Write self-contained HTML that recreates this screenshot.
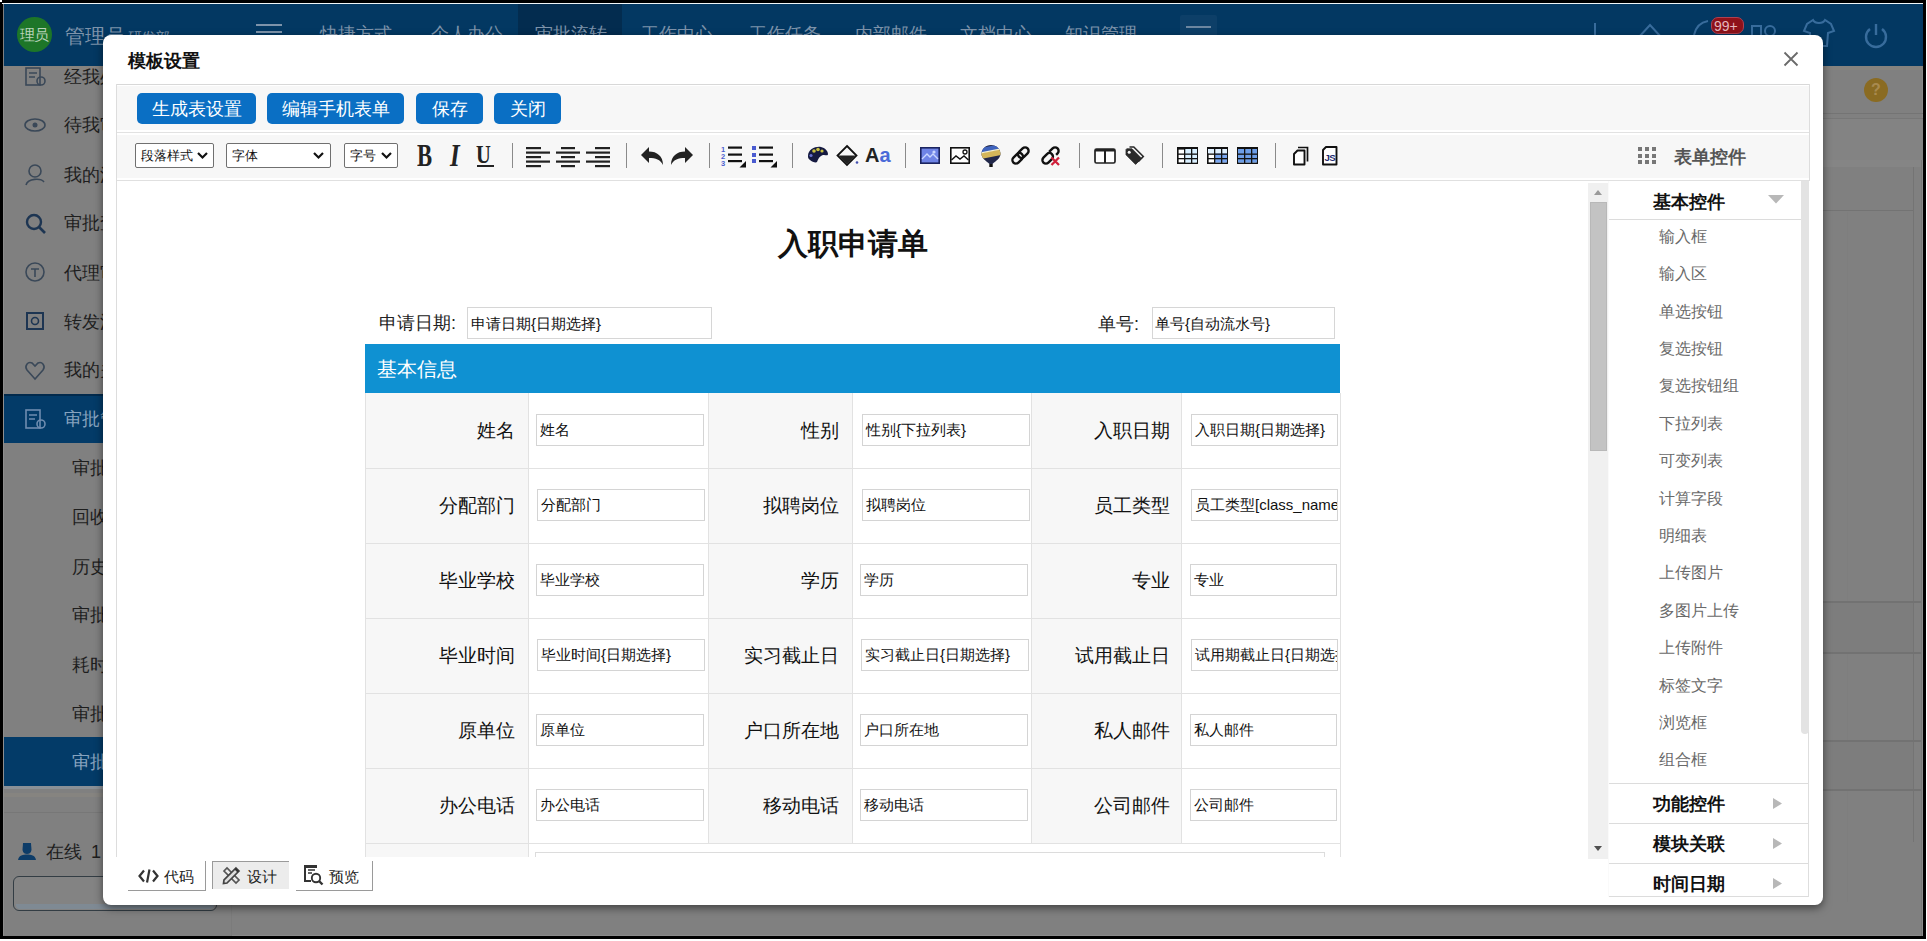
<!DOCTYPE html>
<html><head><meta charset="utf-8">
<style>
*{box-sizing:border-box}
html,body{margin:0;padding:0}
body{width:1927px;height:941px;position:relative;overflow:hidden;background:#fff;font-family:"Liberation Sans",sans-serif;color:#222}
.a{position:absolute}
.t{white-space:nowrap}
svg{overflow:visible}
</style></head><body>
<div class="a" style="left:0px;top:0px;width:1926px;height:939px;background:#000"></div>
<div class="a" style="left:3px;top:3px;width:1920px;height:933px;background:#808080"></div>
<div class="a" style="left:2px;top:3px;width:1921px;height:1px;background:#f0f6f8"></div>
<div class="a" style="left:3px;top:66px;width:1px;height:870px;background:#8e8e8e"></div>
<div class="a" style="left:0px;top:0px;width:2px;height:2px;background:#fff"></div>
<div class="a" style="left:1922px;top:4px;width:1px;height:932px;background:#8a8a8a"></div>
<div class="a" style="left:3px;top:935px;width:1920px;height:1px;background:#8a8a8a"></div>
<div class="a" style="left:4px;top:4px;width:1919px;height:62px;background:#033862"></div>
<div class="a" style="left:518px;top:4px;width:104px;height:62px;background:#032c4f"></div>
<div class="a" style="left:17px;top:17px;width:35px;height:35px;border-radius:50%;background:#1d7628"></div>
<div class="a t" style="left:20px;top:26.0px;font-size:15px;line-height:18px;color:#b9d3ba;letter-spacing:-1px">理员</div>
<div class="a t" style="left:65px;top:25.0px;font-size:20px;line-height:22px;color:#7d93aa">管理员</div>
<div class="a t" style="left:128px;top:28.0px;font-size:14px;line-height:18px;color:#7d93aa">研发部</div>
<div class="a" style="left:256px;top:24px;width:26px;height:2px;background:#7d93aa"></div>
<div class="a" style="left:256px;top:31px;width:26px;height:2px;background:#7d93aa"></div>
<div class="a t" style="left:320px;top:23.5px;font-size:18px;line-height:20px;color:#7d93aa">快捷方式</div>
<div class="a t" style="left:431px;top:23.5px;font-size:18px;line-height:20px;color:#7d93aa">个人办公</div>
<div class="a t" style="left:535px;top:23.5px;font-size:18px;line-height:20px;color:#7d93aa">审批流转</div>
<div class="a t" style="left:641px;top:23.5px;font-size:18px;line-height:20px;color:#7d93aa">工作中心</div>
<div class="a t" style="left:749px;top:23.5px;font-size:18px;line-height:20px;color:#7d93aa">工作任务</div>
<div class="a t" style="left:855px;top:23.5px;font-size:18px;line-height:20px;color:#7d93aa">内部邮件</div>
<div class="a t" style="left:960px;top:23.5px;font-size:18px;line-height:20px;color:#7d93aa">文档中心</div>
<div class="a t" style="left:1065px;top:23.5px;font-size:18px;line-height:20px;color:#7d93aa">知识管理</div>
<div class="a" style="left:1180px;top:15px;width:37px;height:25px;background:#0d3f68;border-radius:2px"></div>
<div class="a" style="left:1186px;top:26px;width:25px;height:2px;background:#6c86a0"></div>
<div class="a" style="left:1594px;top:23px;width:2px;height:14px;background:#386c9c"></div>
<svg class="a" style="left:1637px;top:21px;" width="28" height="18" viewBox="0 0 28 18"><path d="M2 16 L13 4 L24 16" fill="none" stroke="#386c9c" stroke-width="2"/></svg>
<svg class="a" style="left:1690px;top:18px;" width="24" height="18" viewBox="0 0 24 18"><path d="M4 17 C6 8 12 4 18 3" fill="none" stroke="#386c9c" stroke-width="2"/></svg>
<div class="a" style="left:1711px;top:17px;width:33px;height:17px;border-radius:7px;background:#8e1119;border:1px solid #b04050"></div>
<div class="a t" style="left:1714px;top:18.0px;font-size:14px;line-height:16px;color:#e6b8bc">99+</div>
<svg class="a" style="left:1751px;top:24px;" width="26" height="12" viewBox="0 0 26 12"><rect x="1" y="2" width="9" height="10" fill="none" stroke="#386c9c" stroke-width="2"/><circle cx="19" cy="7" r="5" fill="none" stroke="#386c9c" stroke-width="2"/></svg>
<svg class="a" style="left:1803px;top:18px;" width="32" height="30" viewBox="0 0 32 30"><path d="M10 2 L4 6 L1 13 L7 15 L8 28 L24 28 L25 15 L31 13 L28 6 L22 2 C20 6 12 6 10 2 Z" fill="none" stroke="#386c9c" stroke-width="2"/></svg>
<svg class="a" style="left:1862px;top:22px;" width="28" height="28" viewBox="0 0 28 28"><path d="M8 7 A10 10 0 1 0 20 7" fill="none" stroke="#386c9c" stroke-width="2.4"/><line x1="14" y1="2" x2="14" y2="13" stroke="#386c9c" stroke-width="2.4"/></svg>
<div class="a" style="left:4px;top:66px;width:227px;height:870px;background:#808080"></div>
<div class="a" style="left:231px;top:66px;width:1px;height:870px;background:#7b7b7b"></div>
<div class="a" style="left:4px;top:66px;width:227px;height:4px;background:#86837f"></div>
<div class="a t" style="left:64px;top:66.5px;font-size:18px;line-height:20px;color:#1e1e1e">经我处理</div>
<div class="a t" style="left:64px;top:115.0px;font-size:18px;line-height:20px;color:#1e1e1e">待我审批</div>
<div class="a t" style="left:64px;top:164.5px;font-size:18px;line-height:20px;color:#1e1e1e">我的流程</div>
<div class="a t" style="left:64px;top:213.0px;font-size:18px;line-height:20px;color:#1e1e1e">审批查询</div>
<div class="a t" style="left:64px;top:262.5px;font-size:18px;line-height:20px;color:#1e1e1e">代理审批</div>
<div class="a t" style="left:64px;top:311.5px;font-size:18px;line-height:20px;color:#1e1e1e">转发流程</div>
<div class="a t" style="left:64px;top:360.0px;font-size:18px;line-height:20px;color:#1e1e1e">我的关注</div>
<div class="a t" style="left:64px;top:409.0px;font-size:18px;line-height:20px;color:#1e1e1e">审批管理</div>
<div class="a" style="left:4px;top:394px;width:227px;height:49px;background:#033b68"></div>
<div class="a" style="left:4px;top:394px;width:227px;height:2px;background:#022a4c"></div>
<div class="a" style="left:4px;top:737px;width:227px;height:2px;background:#022a4c"></div>
<div class="a t" style="left:64px;top:409.0px;font-size:18px;line-height:20px;color:#87a3bf">审批管理</div>
<div class="a" style="left:4px;top:737px;width:227px;height:49px;background:#033b68"></div>
<div class="a t" style="left:72px;top:458.0px;font-size:18px;line-height:20px;color:#1e1e1e">审批设置</div>
<div class="a t" style="left:72px;top:507.0px;font-size:18px;line-height:20px;color:#1e1e1e">回收站</div>
<div class="a t" style="left:72px;top:556.5px;font-size:18px;line-height:20px;color:#1e1e1e">历史数据</div>
<div class="a t" style="left:72px;top:605.0px;font-size:18px;line-height:20px;color:#1e1e1e">审批统计</div>
<div class="a t" style="left:72px;top:654.5px;font-size:18px;line-height:20px;color:#1e1e1e">耗时统计</div>
<div class="a t" style="left:72px;top:703.5px;font-size:18px;line-height:20px;color:#1e1e1e">审批模板</div>
<div class="a t" style="left:72px;top:752.0px;font-size:18px;line-height:20px;color:#87a3bf">审批表单</div>
<svg class="a" style="left:25px;top:67px;" width="22" height="20" viewBox="0 0 22 20"><rect x="1" y="1" width="14" height="17" fill="none" stroke="#3a4858" stroke-width="1.6"/><path d="M4 6h8M4 10h6" stroke="#3a4858" stroke-width="1.6"/><circle cx="16" cy="14" r="4" fill="none" stroke="#3a4858" stroke-width="1.6"/></svg>
<svg class="a" style="left:24px;top:118px;" width="22" height="14" viewBox="0 0 22 14"><ellipse cx="11" cy="7" rx="10" ry="6" fill="none" stroke="#3a4858" stroke-width="1.6"/><circle cx="11" cy="7" r="2.5" fill="#3a4858"/></svg>
<svg class="a" style="left:25px;top:164px;" width="22" height="22" viewBox="0 0 22 22"><circle cx="10" cy="7" r="6" fill="none" stroke="#3a4858" stroke-width="1.6"/><path d="M1 21 C3 14 16 14 19 18" fill="none" stroke="#3a4858" stroke-width="1.6"/></svg>
<svg class="a" style="left:25px;top:213px;" width="22" height="22" viewBox="0 0 22 22"><circle cx="9" cy="9" r="7" fill="none" stroke="#1d3552" stroke-width="2.4"/><line x1="14" y1="14" x2="20" y2="20" stroke="#1d3552" stroke-width="2.6"/></svg>
<svg class="a" style="left:25px;top:262px;" width="22" height="22" viewBox="0 0 22 22"><circle cx="10" cy="10" r="9" fill="none" stroke="#3a4858" stroke-width="1.6"/><path d="M6 7h8M10 7v8" stroke="#3a4858" stroke-width="1.6"/></svg>
<svg class="a" style="left:25px;top:311px;" width="22" height="22" viewBox="0 0 22 22"><rect x="2" y="2" width="16" height="16" fill="none" stroke="#1d3552" stroke-width="2"/><circle cx="10" cy="10" r="3.5" fill="none" stroke="#1d3552" stroke-width="1.6"/></svg>
<svg class="a" style="left:25px;top:361px;" width="22" height="20" viewBox="0 0 22 20"><path d="M10 18 L2 9 C-1 5 3 0 7 2 L10 5 L13 2 C17 0 21 5 18 9 Z" fill="none" stroke="#3a4858" stroke-width="1.6"/></svg>
<svg class="a" style="left:25px;top:409px;" width="22" height="22" viewBox="0 0 22 22"><rect x="1" y="1" width="14" height="18" fill="none" stroke="#6f8db0" stroke-width="1.6"/><path d="M4 6h8M4 10h6" stroke="#6f8db0" stroke-width="1.6"/><circle cx="16" cy="15" r="4" fill="none" stroke="#6f8db0" stroke-width="1.6"/></svg>
<div class="a" style="left:4px;top:786px;width:227px;height:3px;background:#8a9096"></div>
<div class="a" style="left:4px;top:793px;width:227px;height:4px;background:#868480"></div>
<svg class="a" style="left:17px;top:842px;" width="20" height="18" viewBox="0 0 20 18"><path d="M6 1 L14 1 L14.5 8 C14 11 12 12 10 12 C8 12 6 11 5.5 8 Z" fill="#0d3c68"/><path d="M1 18 C2 13 6 12.5 10 12.5 C14 12.5 18 13 19 18 Z" fill="#0d3c68"/></svg>
<div class="a t" style="left:46px;top:842.0px;font-size:18px;line-height:20px;color:#1e1e1e">在线</div>
<div class="a t" style="left:91px;top:842.0px;font-size:18px;line-height:20px;color:#1e1e1e">1</div>
<div class="a" style="left:4px;top:812px;width:227px;height:1px;background:#777"></div>
<div class="a" style="left:13px;top:876px;width:204px;height:35px;border:1px solid #333d44;border-radius:6px;background:#838383"></div>
<div class="a" style="left:16px;top:904px;width:198px;height:5px;background:#7f8a94;border-radius:0 0 4px 4px"></div>
<div class="a" style="left:1823px;top:66px;width:100px;height:4px;background:#86837f"></div>
<div class="a" style="left:1864px;top:78px;width:24px;height:24px;border-radius:50%;background:#8a6b22"></div>
<div class="a t" style="left:1871px;top:81.0px;font-size:16px;line-height:18px;color:#a88a50;font-weight:bold">?</div>
<div class="a" style="left:1823px;top:113px;width:100px;height:1px;background:#747474"></div>
<div class="a" style="left:1823px;top:118px;width:100px;height:1px;background:#777777"></div>
<div class="a" style="left:1823px;top:119px;width:100px;height:41px;background:#838383"></div>
<div class="a" style="left:1823px;top:160px;width:98px;height:7px;background:#858585"></div>
<div class="a" style="left:1913px;top:167px;width:1px;height:675px;background:#747474"></div>
<div class="a" style="left:1921px;top:160px;width:1px;height:776px;background:#767676"></div>
<div class="a" style="left:1823px;top:210px;width:90px;height:1px;background:#737373"></div>
<div class="a" style="left:1847px;top:212px;width:1px;height:690px;background:#7e7e7e"></div>
<div class="a" style="left:1823px;top:602px;width:90px;height:50px;background:#7d7d7d"></div>
<div class="a" style="left:1823px;top:741px;width:90px;height:48px;background:#7d7d7d"></div>
<div class="a" style="left:1823px;top:601px;width:98px;height:1.5px;background:#727272"></div>
<div class="a" style="left:1823px;top:652px;width:98px;height:1.5px;background:#727272"></div>
<div class="a" style="left:1823px;top:740px;width:98px;height:1.5px;background:#727272"></div>
<div class="a" style="left:1823px;top:789px;width:98px;height:1.5px;background:#727272"></div>
<div class="a" style="left:103px;top:35px;width:1720px;height:870px;background:#fff;border-radius:8px;box-shadow:0 3px 9px rgba(0,0,0,.5)"></div>
<div class="a t" style="left:128px;top:50.0px;font-size:18px;line-height:22px;font-weight:bold;color:#111">模板设置</div>
<svg class="a" style="left:1783px;top:51px;" width="16" height="16" viewBox="0 0 16 16"><path d="M1.5 1.5 L14.5 14.5 M14.5 1.5 L1.5 14.5" stroke="#6a6a6a" stroke-width="1.8"/></svg>
<div class="a" style="left:116px;top:84px;width:1694px;height:1px;background:#d8d8d8"></div>
<div class="a" style="left:116px;top:84px;width:1px;height:773px;background:#dddddd"></div>
<div class="a" style="left:1809px;top:84px;width:1px;height:97px;background:#dddddd"></div>
<div class="a" style="left:117px;top:86px;width:1692px;height:44px;background:#f7f7f7"></div>
<div class="a" style="left:117px;top:132px;width:1692px;height:1px;background:#e2e2e2"></div>
<div class="a" style="left:117px;top:135px;width:1692px;height:43px;background:#f7f7f7"></div>
<div class="a" style="left:117px;top:180px;width:1692px;height:1px;background:#e0e0e0"></div>
<div class="a t" style="left:137px;top:93px;width:119px;height:31px;border-radius:5px;background:#0a6fc4;color:#fff;font-size:18px;line-height:33px;text-align:center">生成表设置</div>
<div class="a t" style="left:267px;top:93px;width:137px;height:31px;border-radius:5px;background:#0a6fc4;color:#fff;font-size:18px;line-height:33px;text-align:center">编辑手机表单</div>
<div class="a t" style="left:416px;top:93px;width:67px;height:31px;border-radius:5px;background:#0a6fc4;color:#fff;font-size:18px;line-height:33px;text-align:center">保存</div>
<div class="a t" style="left:494px;top:93px;width:67px;height:31px;border-radius:5px;background:#0a6fc4;color:#fff;font-size:18px;line-height:33px;text-align:center">关闭</div>
<div class="a" style="left:135px;top:143px;width:79px;height:25px;border:1px solid #707070;border-radius:2px;background:#fff"></div>
<div class="a t" style="left:141px;top:148.0px;font-size:13px;line-height:16px;color:#111">段落样式</div>
<svg class="a" style="left:197px;top:152px;" width="11" height="7" viewBox="0 0 11 7"><path d="M1 1 L5.5 5.5 L10 1" fill="none" stroke="#111" stroke-width="2.2"/></svg>
<div class="a" style="left:226px;top:143px;width:105px;height:25px;border:1px solid #707070;border-radius:2px;background:#fff"></div>
<div class="a t" style="left:232px;top:148.0px;font-size:13px;line-height:16px;color:#111">字体</div>
<svg class="a" style="left:313px;top:152px;" width="11" height="7" viewBox="0 0 11 7"><path d="M1 1 L5.5 5.5 L10 1" fill="none" stroke="#111" stroke-width="2.2"/></svg>
<div class="a" style="left:344px;top:143px;width:54px;height:25px;border:1px solid #707070;border-radius:2px;background:#fff"></div>
<div class="a t" style="left:350px;top:148.0px;font-size:13px;line-height:16px;color:#111">字号</div>
<svg class="a" style="left:381px;top:152px;" width="11" height="7" viewBox="0 0 11 7"><path d="M1 1 L5.5 5.5 L10 1" fill="none" stroke="#111" stroke-width="2.2"/></svg>
<div class="a t" style="left:417px;top:141px;font-family:'Liberation Serif',serif;font-weight:bold;font-size:31px;line-height:30px;color:#222;transform:scaleX(0.73);transform-origin:0 0">B</div>
<div class="a t" style="left:450px;top:141px;font-family:'Liberation Serif',serif;font-style:italic;font-weight:bold;font-size:31px;line-height:30px;color:#222;transform:scaleX(0.8);transform-origin:0 0">I</div>
<div class="a t" style="left:476px;top:140px;font-family:'Liberation Serif',serif;font-weight:bold;font-size:25px;line-height:30px;color:#222;transform:scaleX(0.82);transform-origin:0 0">U</div>
<div class="a" style="left:477px;top:165px;width:17px;height:1.6px;background:#222"></div>
<div class="a" style="left:512px;top:143px;width:1px;height:25px;background:#8a8a8a"></div>
<div class="a" style="left:626px;top:143px;width:1px;height:25px;background:#8a8a8a"></div>
<div class="a" style="left:709px;top:143px;width:1px;height:25px;background:#8a8a8a"></div>
<div class="a" style="left:792px;top:143px;width:1px;height:25px;background:#8a8a8a"></div>
<div class="a" style="left:905px;top:143px;width:1px;height:25px;background:#8a8a8a"></div>
<div class="a" style="left:1079px;top:143px;width:1px;height:25px;background:#8a8a8a"></div>
<div class="a" style="left:1162px;top:143px;width:1px;height:25px;background:#8a8a8a"></div>
<div class="a" style="left:1275px;top:143px;width:1px;height:25px;background:#8a8a8a"></div>
<svg class="a" style="left:526px;top:147px;" width="24" height="20" viewBox="0 0 24 20"><rect x="0" y="0" width="15" height="2.2" fill="#222"/><rect x="0" y="4.5" width="24" height="2.2" fill="#222"/><rect x="0" y="9" width="15" height="2.2" fill="#222"/><rect x="0" y="13.5" width="24" height="2.2" fill="#222"/><rect x="0" y="18" width="15" height="2.2" fill="#222"/></svg>
<svg class="a" style="left:556px;top:147px;" width="24" height="20" viewBox="0 0 24 20"><rect x="5" y="0" width="14" height="2.2" fill="#222"/><rect x="0" y="4.5" width="24" height="2.2" fill="#222"/><rect x="5" y="9" width="14" height="2.2" fill="#222"/><rect x="0" y="13.5" width="24" height="2.2" fill="#222"/><rect x="5" y="18" width="14" height="2.2" fill="#222"/></svg>
<svg class="a" style="left:586px;top:147px;" width="24" height="20" viewBox="0 0 24 20"><rect x="9" y="0" width="15" height="2.2" fill="#222"/><rect x="0" y="4.5" width="24" height="2.2" fill="#222"/><rect x="9" y="9" width="15" height="2.2" fill="#222"/><rect x="0" y="13.5" width="24" height="2.2" fill="#222"/><rect x="9" y="18" width="15" height="2.2" fill="#222"/></svg>
<svg class="a" style="left:641px;top:147px;" width="22" height="18" viewBox="0 0 22 18"><path d="M0 8 L8 0 L8 4.5 C16 4.5 22 9 22 18 C19 12.5 15 11 8 11 L8 16 Z" fill="#222"/></svg>
<svg class="a" style="left:671px;top:147px;" width="22" height="18" viewBox="0 0 22 18"><g transform="translate(22,0) scale(-1,1)"><path d="M0 8 L8 0 L8 4.5 C16 4.5 22 9 22 18 C19 12.5 15 11 8 11 L8 16 Z" fill="#222"/></g></svg>
<svg class="a" style="left:721px;top:145px;" width="25" height="23" viewBox="0 0 25 23"><g font-family="Liberation Sans" font-size="7.5" font-weight="bold" fill="#4d5fd0"><text x="0" y="6.5">1</text><text x="0" y="13.5">2</text><text x="0" y="20.5">3</text></g><rect x="7" y="1.5" width="14" height="2.2" fill="#111"/><rect x="7" y="8.5" width="14" height="2.2" fill="#111"/><rect x="7" y="15" width="14" height="2.2" fill="#111"/><path d="M25 16 L25 22.5 L18.5 22.5 Z" fill="#111"/></svg>
<svg class="a" style="left:752px;top:145px;" width="25" height="23" viewBox="0 0 25 23"><rect x="0" y="1" width="4" height="4" fill="#4a5bd0"/><rect x="0" y="8" width="4" height="4" fill="#4a5bd0"/><rect x="0" y="14" width="4" height="4" fill="#4a5bd0"/><rect x="7" y="1.5" width="14" height="2.2" fill="#111"/><rect x="7" y="8.5" width="14" height="2.2" fill="#111"/><rect x="7" y="15" width="14" height="2.2" fill="#111"/><path d="M25 16 L25 22.5 L18.5 22.5 Z" fill="#111"/></svg>
<svg class="a" style="left:807px;top:146px;" width="21" height="17" viewBox="0 0 21 17"><path d="M1 10 C1 3 9 0 14 1 C18 2 21 5 21 8 C21 10 19 9 17 9 C14 9 12 11 10 16 C9 17 5 16 3 14 C1 13 1 11 1 10 Z" fill="#151a40"/><circle cx="7" cy="5" r="1.8" fill="#c8c040"/><circle cx="11" cy="3.5" r="1.8" fill="#c8c040"/><circle cx="15" cy="5" r="1.6" fill="#c8c040"/><circle cx="4" cy="9.5" r="1.6" fill="#6670d0"/></svg>
<svg class="a" style="left:837px;top:145px;" width="22" height="21" viewBox="0 0 22 21"><path d="M10 1 L19.5 10.5 L10 20 L0.5 10.5 Z" fill="none" stroke="#111" stroke-width="1.8"/><path d="M1.5 10.5 L18.5 10.5 L10 19 Z" fill="#222"/><circle cx="20" cy="17.5" r="1.3" fill="#4450b0"/></svg>
<div class="a t" style="left:865px;top:143px;font-size:20px;line-height:24px;font-weight:bold;color:#222">A<span style="color:#4a6ad8">a</span></div>
<svg class="a" style="left:920px;top:147px;" width="20" height="17" viewBox="0 0 20 17"><rect x="0.8" y="0.8" width="18.4" height="15.4" fill="#6f84e6" stroke="#1b2460" stroke-width="1.6"/><path d="M2 12 L7 7 L10 10 L13 7 L18 12" fill="none" stroke="#c9d6ff" stroke-width="1.4"/><circle cx="14" cy="5" r="1.6" fill="#c9d6ff"/></svg>
<svg class="a" style="left:950px;top:147px;" width="20" height="17" viewBox="0 0 20 17"><rect x="0.8" y="0.8" width="18.4" height="15.4" fill="#fff" stroke="#111" stroke-width="1.6"/><path d="M1.5 13 L6 9 L10 12 L14 9 L18.5 13" fill="none" stroke="#111" stroke-width="1.4"/><circle cx="15" cy="5" r="2" fill="none" stroke="#111" stroke-width="1.3"/></svg>
<svg class="a" style="left:981px;top:145px;" width="20" height="22" viewBox="0 0 20 22"><defs><clipPath id="bl"><path d="M10 0 C15.5 0 19.5 4 19.5 9 C19.5 13 15 16 11.5 19 L8.5 19 C5 16 0.5 13 0.5 9 C0.5 4 4.5 0 10 0 Z"/></clipPath></defs><g clip-path="url(#bl)"><rect x="0" y="0" width="20" height="20" fill="#22284a"/><path d="M0 3 L20 -1 L20 4 L0 8 Z" fill="#3f63bd"/><path d="M0 8 L20 4 L20 10 L0 14 Z" fill="#d4b65a"/><path d="M0 7.3 L20 3.3 L20 4.6 L0 8.6 Z" fill="#f4f0d0"/></g><rect x="8.3" y="19" width="3.4" height="3" fill="#111"/></svg>
<svg class="a" style="left:1010px;top:145px;" width="21" height="21" viewBox="0 0 21 21"><g transform="rotate(-45 10.5 10.5)" fill="none" stroke="#111" stroke-width="2.4"><rect x="0.5" y="7" width="12" height="7" rx="3.5"/><rect x="8.5" y="7" width="12" height="7" rx="3.5"/></g></svg>
<svg class="a" style="left:1040px;top:145px;" width="21" height="21" viewBox="0 0 21 21"><g transform="rotate(-45 10.5 10.5)" fill="none" stroke="#111" stroke-width="2.4"><rect x="0.5" y="7" width="12" height="7" rx="3.5"/><path d="M12 7 L17 7 A3.5 3.5 0 0 1 17 14 L15 14"/></g><path d="M11.5 12.5 L19 20 M19 12.5 L11.5 20" stroke="#d0203a" stroke-width="2.3"/></svg>
<svg class="a" style="left:1094px;top:148px;" width="22" height="16" viewBox="0 0 22 16"><rect x="1" y="1" width="20" height="14" rx="1.5" fill="#fff" stroke="#222" stroke-width="1.7"/><rect x="1" y="1" width="20" height="2.5" fill="#222"/><rect x="10" y="1" width="2" height="14" fill="#222"/></svg>
<svg class="a" style="left:1125px;top:146px;" width="19" height="19" viewBox="0 0 19 19"><path d="M4.5 1 L8.8 1 L18.3 10.5 L13.2 15.6" fill="none" stroke="#2a2a2a" stroke-width="1.6"/><path d="M1 3.5 L1 8.8 L10.6 18.4 L16.6 12.4 L7 2.8 L1.7 2.8 Z" fill="#2a2a2a" stroke="#2a2a2a" stroke-width="0.8" stroke-linejoin="round"/><circle cx="4.2" cy="6.2" r="1.5" fill="#f7f7f7"/></svg>
<svg class="a" style="left:1177px;top:147px;" width="21" height="17" viewBox="0 0 21 17"><rect x="0.8" y="0.8" width="19.4" height="15.4" fill="#fff" stroke="#111" stroke-width="1.6"/><rect x="0" y="0" width="21" height="2.6" fill="#111"/><rect x="7" y="2" width="13" height="13.5" fill="#d8efff"/><rect x="7" y="1" width="1.3" height="15" fill="#111"/><rect x="14" y="1" width="1.3" height="15" fill="#111"/><rect x="1" y="6.5" width="19" height="1.3" fill="#111"/><rect x="1" y="11" width="19" height="1.3" fill="#111"/></svg>
<svg class="a" style="left:1207px;top:147px;" width="21" height="17" viewBox="0 0 21 17"><rect x="0.8" y="0.8" width="19.4" height="15.4" fill="#fff" stroke="#111" stroke-width="1.6"/><rect x="0" y="0" width="21" height="2.6" fill="#111"/><rect x="7" y="6" width="13" height="9.5" fill="#7aa7f0"/><rect x="1" y="2" width="19" height="4.5" fill="#e0f0ff"/><rect x="7" y="1" width="1.3" height="15" fill="#111"/><rect x="14" y="1" width="1.3" height="15" fill="#111"/><rect x="1" y="6.5" width="19" height="1.3" fill="#111"/><rect x="1" y="11" width="19" height="1.3" fill="#111"/></svg>
<svg class="a" style="left:1237px;top:147px;" width="21" height="17" viewBox="0 0 21 17"><rect x="0.8" y="0.8" width="19.4" height="15.4" fill="#fff" stroke="#111" stroke-width="1.6"/><rect x="0" y="0" width="21" height="2.6" fill="#111"/><rect x="1" y="2" width="19" height="13.5" fill="#6d9de6"/><rect x="7" y="1" width="1.3" height="15" fill="#111"/><rect x="14" y="1" width="1.3" height="15" fill="#111"/><rect x="1" y="6.5" width="19" height="1.3" fill="#111"/><rect x="1" y="11" width="19" height="1.3" fill="#111"/></svg>
<svg class="a" style="left:1293px;top:146px;" width="16" height="20" viewBox="0 0 16 20"><path d="M5 1.5 L14.5 1.5 L14.5 15.5" fill="none" stroke="#111" stroke-width="1.7"/><path d="M4.5 4.5 L11.5 4.5 L11.5 18.5 L1 18.5 L1 8 Z" fill="#fff" stroke="#111" stroke-width="1.9" stroke-linejoin="round"/></svg>
<svg class="a" style="left:1322px;top:146px;" width="16" height="20" viewBox="0 0 16 20"><path d="M4 1 L14.5 1 L14.5 18.5 L1 18.5 L1 4 Z" fill="#fff" stroke="#111" stroke-width="1.9" stroke-linejoin="round"/><text x="2.4" y="14.8" style="font-family:'Liberation Sans',sans-serif;font-size:9.6px;font-weight:bold;letter-spacing:-0.4px" fill="#1e2a70">JS</text></svg>
<div class="a" style="left:1638px;top:147.0px;width:4px;height:4px;background:#777"></div>
<div class="a" style="left:1645px;top:147.0px;width:4px;height:4px;background:#777"></div>
<div class="a" style="left:1652px;top:147.0px;width:4px;height:4px;background:#777"></div>
<div class="a" style="left:1638px;top:153.5px;width:4px;height:4px;background:#777"></div>
<div class="a" style="left:1645px;top:153.5px;width:4px;height:4px;background:#777"></div>
<div class="a" style="left:1652px;top:153.5px;width:4px;height:4px;background:#777"></div>
<div class="a" style="left:1638px;top:160.0px;width:4px;height:4px;background:#777"></div>
<div class="a" style="left:1645px;top:160.0px;width:4px;height:4px;background:#777"></div>
<div class="a" style="left:1652px;top:160.0px;width:4px;height:4px;background:#777"></div>
<div class="a t" style="left:1674px;top:147.0px;font-size:18px;line-height:20px;font-weight:bold;color:#555">表单控件</div>
<div class="a t" style="left:552.5px;width:600px;text-align:center;top:225.5px;font-size:30px;line-height:36px;font-weight:bold;color:#111">入职申请单</div>
<div class="a t" style="left:379px;top:313.0px;font-size:18px;line-height:20px;color:#222">申请日期:</div>
<div class="a" style="left:467px;top:307px;width:245px;height:32px;border:1px solid #d6d6d6;background:#fff"></div>
<div class="a t" style="left:471px;top:314.5px;font-size:15px;line-height:18px;color:#111">申请日期{日期选择}</div>
<div class="a t" style="left:1098px;top:313.5px;font-size:18px;line-height:20px;color:#222">单号:</div>
<div class="a" style="left:1152px;top:307px;width:183px;height:32px;border:1px solid #d6d6d6;background:#fff"></div>
<div class="a t" style="left:1155px;top:314.5px;font-size:15px;line-height:18px;color:#111">单号{自动流水号}</div>
<div class="a" style="left:365px;top:344px;width:975px;height:49px;background:#0f91d2"></div>
<div class="a t" style="left:377px;top:357.5px;font-size:20px;line-height:22px;color:#fff">基本信息</div>
<div class="a" style="left:708px;top:393px;width:144px;height:450px;background:#f7f7f7"></div>
<div class="a" style="left:1031px;top:393px;width:150px;height:450px;background:#f7f7f7"></div>
<div class="a" style="left:365px;top:393px;width:163px;height:465px;background:#f7f7f7"></div>
<div class="a" style="left:365px;top:393px;width:1px;height:465px;background:#e2e2e2"></div>
<div class="a" style="left:528px;top:393px;width:1px;height:465px;background:#e2e2e2"></div>
<div class="a" style="left:708px;top:393px;width:1px;height:450px;background:#e2e2e2"></div>
<div class="a" style="left:852px;top:393px;width:1px;height:450px;background:#e2e2e2"></div>
<div class="a" style="left:1031px;top:393px;width:1px;height:450px;background:#e2e2e2"></div>
<div class="a" style="left:1181px;top:393px;width:1px;height:450px;background:#e2e2e2"></div>
<div class="a" style="left:1340px;top:393px;width:1px;height:465px;background:#e2e2e2"></div>
<div class="a" style="left:365px;top:468px;width:975px;height:1px;background:#e2e2e2"></div>
<div class="a" style="left:365px;top:543px;width:975px;height:1px;background:#e2e2e2"></div>
<div class="a" style="left:365px;top:618px;width:975px;height:1px;background:#e2e2e2"></div>
<div class="a" style="left:365px;top:693px;width:975px;height:1px;background:#e2e2e2"></div>
<div class="a" style="left:365px;top:768px;width:975px;height:1px;background:#e2e2e2"></div>
<div class="a" style="left:365px;top:843px;width:975px;height:1px;background:#e2e2e2"></div>
<div class="a t" style="left:114.5px;width:400px;text-align:right;top:420.5px;font-size:18.7px;line-height:20px;color:#111">姓名</div>
<div class="a" style="left:536px;top:414px;width:168px;height:32px;border:1px solid #d4d4d4;background:#fff;overflow:hidden"><div class="t" style="position:absolute;left:3px;top:6px;font-size:15px;line-height:18px;color:#111">姓名</div></div>
<div class="a t" style="left:438.5px;width:400px;text-align:right;top:420.5px;font-size:18.7px;line-height:20px;color:#111">性别</div>
<div class="a" style="left:862px;top:414px;width:168px;height:32px;border:1px solid #d4d4d4;background:#fff;overflow:hidden"><div class="t" style="position:absolute;left:3px;top:6px;font-size:15px;line-height:18px;color:#111">性别{下拉列表}</div></div>
<div class="a t" style="left:769.5px;width:400px;text-align:right;top:420.5px;font-size:18.7px;line-height:20px;color:#111">入职日期</div>
<div class="a" style="left:1191px;top:414px;width:147px;height:32px;border:1px solid #d4d4d4;background:#fff;overflow:hidden"><div class="t" style="position:absolute;left:3px;top:6px;font-size:15px;line-height:18px;color:#111">入职日期{日期选择}</div></div>
<div class="a t" style="left:114.5px;width:400px;text-align:right;top:495.5px;font-size:18.7px;line-height:20px;color:#111">分配部门</div>
<div class="a" style="left:537px;top:489px;width:168px;height:32px;border:1px solid #d4d4d4;background:#fff;overflow:hidden"><div class="t" style="position:absolute;left:3px;top:6px;font-size:15px;line-height:18px;color:#111">分配部门</div></div>
<div class="a t" style="left:438.5px;width:400px;text-align:right;top:495.5px;font-size:18.7px;line-height:20px;color:#111">拟聘岗位</div>
<div class="a" style="left:862px;top:489px;width:168px;height:32px;border:1px solid #d4d4d4;background:#fff;overflow:hidden"><div class="t" style="position:absolute;left:3px;top:6px;font-size:15px;line-height:18px;color:#111">拟聘岗位</div></div>
<div class="a t" style="left:769.5px;width:400px;text-align:right;top:495.5px;font-size:18.7px;line-height:20px;color:#111">员工类型</div>
<div class="a" style="left:1191px;top:489px;width:147px;height:32px;border:1px solid #d4d4d4;background:#fff;overflow:hidden"><div class="t" style="position:absolute;left:3px;top:6px;font-size:15px;line-height:18px;color:#111">员工类型[class_name]</div></div>
<div class="a t" style="left:114.5px;width:400px;text-align:right;top:570.5px;font-size:18.7px;line-height:20px;color:#111">毕业学校</div>
<div class="a" style="left:536px;top:564px;width:168px;height:32px;border:1px solid #d4d4d4;background:#fff;overflow:hidden"><div class="t" style="position:absolute;left:3px;top:6px;font-size:15px;line-height:18px;color:#111">毕业学校</div></div>
<div class="a t" style="left:438.5px;width:400px;text-align:right;top:570.5px;font-size:18.7px;line-height:20px;color:#111">学历</div>
<div class="a" style="left:860px;top:564px;width:168px;height:32px;border:1px solid #d4d4d4;background:#fff;overflow:hidden"><div class="t" style="position:absolute;left:3px;top:6px;font-size:15px;line-height:18px;color:#111">学历</div></div>
<div class="a t" style="left:769.5px;width:400px;text-align:right;top:570.5px;font-size:18.7px;line-height:20px;color:#111">专业</div>
<div class="a" style="left:1190px;top:564px;width:147px;height:32px;border:1px solid #d4d4d4;background:#fff;overflow:hidden"><div class="t" style="position:absolute;left:3px;top:6px;font-size:15px;line-height:18px;color:#111">专业</div></div>
<div class="a t" style="left:114.5px;width:400px;text-align:right;top:645.5px;font-size:18.7px;line-height:20px;color:#111">毕业时间</div>
<div class="a" style="left:537px;top:639px;width:168px;height:32px;border:1px solid #d4d4d4;background:#fff;overflow:hidden"><div class="t" style="position:absolute;left:3px;top:6px;font-size:15px;line-height:18px;color:#111">毕业时间{日期选择}</div></div>
<div class="a t" style="left:438.5px;width:400px;text-align:right;top:645.5px;font-size:18.7px;line-height:20px;color:#111">实习截止日</div>
<div class="a" style="left:861px;top:639px;width:168px;height:32px;border:1px solid #d4d4d4;background:#fff;overflow:hidden"><div class="t" style="position:absolute;left:3px;top:6px;font-size:15px;line-height:18px;color:#111">实习截止日{日期选择}</div></div>
<div class="a t" style="left:769.5px;width:400px;text-align:right;top:645.5px;font-size:18.7px;line-height:20px;color:#111">试用截止日</div>
<div class="a" style="left:1191px;top:639px;width:147px;height:32px;border:1px solid #d4d4d4;background:#fff;overflow:hidden"><div class="t" style="position:absolute;left:3px;top:6px;font-size:15px;line-height:18px;color:#111">试用期截止日{日期选择}</div></div>
<div class="a t" style="left:114.5px;width:400px;text-align:right;top:720.5px;font-size:18.7px;line-height:20px;color:#111">原单位</div>
<div class="a" style="left:536px;top:714px;width:168px;height:32px;border:1px solid #d4d4d4;background:#fff;overflow:hidden"><div class="t" style="position:absolute;left:3px;top:6px;font-size:15px;line-height:18px;color:#111">原单位</div></div>
<div class="a t" style="left:438.5px;width:400px;text-align:right;top:720.5px;font-size:18.7px;line-height:20px;color:#111">户口所在地</div>
<div class="a" style="left:860px;top:714px;width:168px;height:32px;border:1px solid #d4d4d4;background:#fff;overflow:hidden"><div class="t" style="position:absolute;left:3px;top:6px;font-size:15px;line-height:18px;color:#111">户口所在地</div></div>
<div class="a t" style="left:769.5px;width:400px;text-align:right;top:720.5px;font-size:18.7px;line-height:20px;color:#111">私人邮件</div>
<div class="a" style="left:1190px;top:714px;width:147px;height:32px;border:1px solid #d4d4d4;background:#fff;overflow:hidden"><div class="t" style="position:absolute;left:3px;top:6px;font-size:15px;line-height:18px;color:#111">私人邮件</div></div>
<div class="a t" style="left:114.5px;width:400px;text-align:right;top:795.5px;font-size:18.7px;line-height:20px;color:#111">办公电话</div>
<div class="a" style="left:536px;top:789px;width:168px;height:32px;border:1px solid #d4d4d4;background:#fff;overflow:hidden"><div class="t" style="position:absolute;left:3px;top:6px;font-size:15px;line-height:18px;color:#111">办公电话</div></div>
<div class="a t" style="left:438.5px;width:400px;text-align:right;top:795.5px;font-size:18.7px;line-height:20px;color:#111">移动电话</div>
<div class="a" style="left:860px;top:789px;width:168px;height:32px;border:1px solid #d4d4d4;background:#fff;overflow:hidden"><div class="t" style="position:absolute;left:3px;top:6px;font-size:15px;line-height:18px;color:#111">移动电话</div></div>
<div class="a t" style="left:769.5px;width:400px;text-align:right;top:795.5px;font-size:18.7px;line-height:20px;color:#111">公司邮件</div>
<div class="a" style="left:1190px;top:789px;width:147px;height:32px;border:1px solid #d4d4d4;background:#fff;overflow:hidden"><div class="t" style="position:absolute;left:3px;top:6px;font-size:15px;line-height:18px;color:#111">公司邮件</div></div>
<div class="a" style="left:535px;top:852px;width:790px;height:10px;border:1px solid #dcdcdc;border-bottom:none;background:#fff"></div>
<div class="a" style="left:117px;top:857px;width:1471px;height:48px;background:#fff"></div>
<div class="a" style="left:1588px;top:183px;width:20px;height:676px;background:#f0f0f0"></div>
<div class="a" style="left:1590px;top:202px;width:17px;height:249px;background:#c3c3c3;border:1px solid #b8b8b8"></div>
<svg class="a" style="left:1594px;top:190px;" width="8" height="5" viewBox="0 0 8 5"><path d="M0 5 L4 0 L8 5 Z" fill="#9a9a9a"/></svg>
<svg class="a" style="left:1594px;top:846px;" width="8" height="5" viewBox="0 0 8 5"><path d="M0 0 L4 5 L8 0 Z" fill="#505050"/></svg>
<div class="a" style="left:1608px;top:181px;width:201px;height:716px;background:#fff"></div>
<div class="a" style="left:1608px;top:181px;width:1px;height:716px;background:#fafafa"></div>
<div class="a" style="left:1808px;top:181px;width:1px;height:716px;background:#dedede"></div>
<div class="a t" style="left:1653px;top:191.5px;font-size:18px;line-height:20px;font-weight:bold;color:#111">基本控件</div>
<svg class="a" style="left:1768px;top:195px;" width="16" height="9" viewBox="0 0 16 9"><path d="M0 0 L16 0 L8 8.5 Z" fill="#b8b8b8"/></svg>
<div class="a" style="left:1609px;top:219px;width:192px;height:1px;background:#dcdcdc"></div>
<div class="a" style="left:1801px;top:181px;width:8px;height:553px;background:#e3e3e3;border-radius:0 0 4px 4px"></div>
<div class="a t" style="left:1659px;top:227.7px;font-size:16px;line-height:18px;color:#6a6a6a">输入框</div>
<div class="a t" style="left:1659px;top:265.11px;font-size:16px;line-height:18px;color:#6a6a6a">输入区</div>
<div class="a t" style="left:1659px;top:302.52px;font-size:16px;line-height:18px;color:#6a6a6a">单选按钮</div>
<div class="a t" style="left:1659px;top:339.92999999999995px;font-size:16px;line-height:18px;color:#6a6a6a">复选按钮</div>
<div class="a t" style="left:1659px;top:377.34px;font-size:16px;line-height:18px;color:#6a6a6a">复选按钮组</div>
<div class="a t" style="left:1659px;top:414.75px;font-size:16px;line-height:18px;color:#6a6a6a">下拉列表</div>
<div class="a t" style="left:1659px;top:452.15999999999997px;font-size:16px;line-height:18px;color:#6a6a6a">可变列表</div>
<div class="a t" style="left:1659px;top:489.57px;font-size:16px;line-height:18px;color:#6a6a6a">计算字段</div>
<div class="a t" style="left:1659px;top:526.98px;font-size:16px;line-height:18px;color:#6a6a6a">明细表</div>
<div class="a t" style="left:1659px;top:564.3899999999999px;font-size:16px;line-height:18px;color:#6a6a6a">上传图片</div>
<div class="a t" style="left:1659px;top:601.8px;font-size:16px;line-height:18px;color:#6a6a6a">多图片上传</div>
<div class="a t" style="left:1659px;top:639.21px;font-size:16px;line-height:18px;color:#6a6a6a">上传附件</div>
<div class="a t" style="left:1659px;top:676.6199999999999px;font-size:16px;line-height:18px;color:#6a6a6a">标签文字</div>
<div class="a t" style="left:1659px;top:714.03px;font-size:16px;line-height:18px;color:#6a6a6a">浏览框</div>
<div class="a t" style="left:1659px;top:751.44px;font-size:16px;line-height:18px;color:#6a6a6a">组合框</div>
<div class="a" style="left:1609px;top:783px;width:199px;height:1px;background:#dcdcdc"></div>
<div class="a t" style="left:1653px;top:794.0px;font-size:18px;line-height:20px;font-weight:bold;color:#111">功能控件</div>
<svg class="a" style="left:1773px;top:798.0px;" width="9" height="11" viewBox="0 0 9 11"><path d="M0 0 L9 5.5 L0 11 Z" fill="#b8b8b8"/></svg>
<div class="a" style="left:1609px;top:823px;width:199px;height:1px;background:#dcdcdc"></div>
<div class="a t" style="left:1653px;top:834.0px;font-size:18px;line-height:20px;font-weight:bold;color:#111">模块关联</div>
<svg class="a" style="left:1773px;top:838.0px;" width="9" height="11" viewBox="0 0 9 11"><path d="M0 0 L9 5.5 L0 11 Z" fill="#b8b8b8"/></svg>
<div class="a" style="left:1609px;top:863px;width:199px;height:1px;background:#dcdcdc"></div>
<div class="a t" style="left:1653px;top:874.0px;font-size:18px;line-height:20px;font-weight:bold;color:#111">时间日期</div>
<svg class="a" style="left:1773px;top:878.0px;" width="9" height="11" viewBox="0 0 9 11"><path d="M0 0 L9 5.5 L0 11 Z" fill="#b8b8b8"/></svg>
<div class="a" style="left:1609px;top:896px;width:199px;height:1px;background:#dcdcdc"></div>
<div class="a" style="left:128px;top:861px;width:78px;height:30px;background:#fff;border-right:1px solid #9a9a9a;border-bottom:1px solid #9a9a9a"></div>
<svg class="a" style="left:138px;top:869px;" width="21" height="14" viewBox="0 0 21 14"><path d="M6 1.5 L1.5 7 L6 12.5 M15 1.5 L19.5 7 L15 12.5" fill="none" stroke="#333" stroke-width="2.2"/><path d="M11.5 0.5 L9 13.5" stroke="#333" stroke-width="2.2"/></svg>
<div class="a t" style="left:164px;top:867.5px;font-size:15px;line-height:18px;color:#222">代码</div>
<div class="a" style="left:212px;top:861px;width:77px;height:28px;background:#ececec;border-top:1px solid #9a9a9a;border-left:1px solid #9a9a9a"></div>
<svg class="a" style="left:222px;top:866px;" width="19" height="17" viewBox="0 0 19 17"><path d="M2 5 L5 2 L17 14 L14 17 Z" fill="none" stroke="#555" stroke-width="1.7"/><path d="M14 2 L17 5 L5 17 L1.5 17.5 L2 14 Z" fill="#ddd" stroke="#444" stroke-width="1.7"/><path d="M14 2 L17 5 L15.5 6.5 L12.5 3.5Z" fill="#333"/></svg>
<div class="a t" style="left:247px;top:867.5px;font-size:15px;line-height:18px;color:#222">设计</div>
<div class="a" style="left:296px;top:861px;width:77px;height:30px;background:#fff;border-right:1px solid #9a9a9a;border-bottom:1px solid #9a9a9a"></div>
<svg class="a" style="left:304px;top:865px;" width="19" height="21" viewBox="0 0 19 21"><path d="M13 1 L1 1 L1 16 L7 16" fill="none" stroke="#333" stroke-width="2"/><rect x="1" y="1" width="12" height="2" fill="#333"/><path d="M4 5h7M4 8h4" stroke="#333" stroke-width="1.4"/><circle cx="12" cy="13" r="4.2" fill="#fff" stroke="#333" stroke-width="1.9"/><path d="M15 16 L18.5 19.5" stroke="#333" stroke-width="2.4"/></svg>
<div class="a t" style="left:329px;top:867.5px;font-size:15px;line-height:18px;color:#222">预览</div>
</body></html>
